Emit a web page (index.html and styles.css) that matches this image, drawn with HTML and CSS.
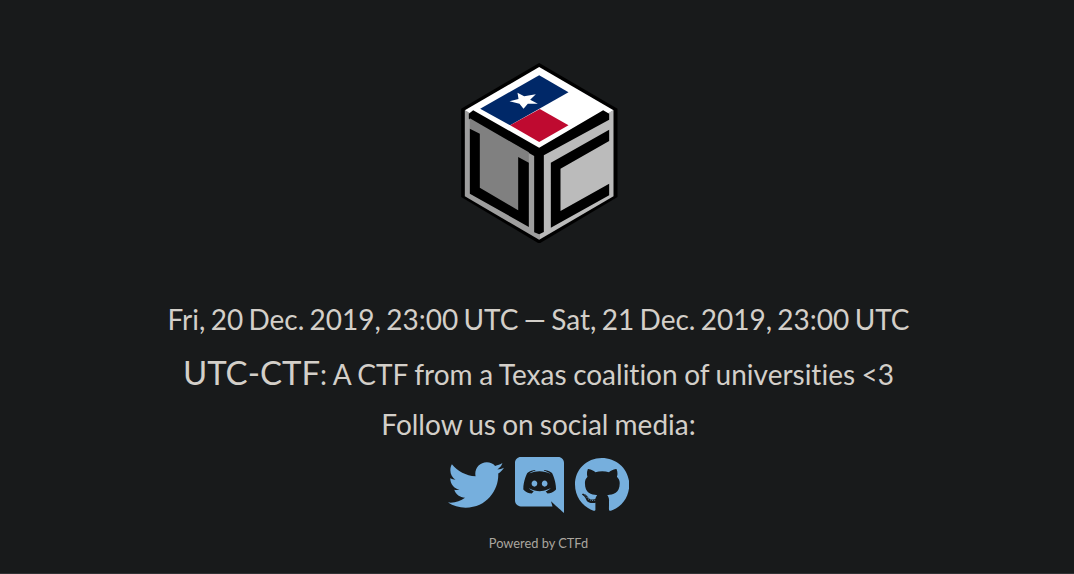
FILE: index.html
```html
<!DOCTYPE html>
<html lang="en">
<head>
    <meta charset="UTF-8">
    <meta name="viewport" content="width=device-width, initial-scale=1.0">
    <title>UTC-CTF</title>
    <link rel="stylesheet" href="styles.css">
</head>
<body>
    <main class="page">
        <!-- logo is traced in 3x coordinates -->
        <svg class="logo" viewBox="63 38 470 540" role="img" aria-label="UTC-CTF logo">
            <polygon fill="#000" points="297,38 532,175 532,440 297,580 63,440 63,175"/>
            <polygon fill="#9e9e9e" points="74,180 297,292 297,568 74,438"/>
            <polygon fill="#bbb" points="297,292 520,180 520,438 297,568"/>
            <polygon fill="#fff" points="297,50 520,180 297,308 74,180"/>
            <polygon fill="#002868" points="297,75 385,126 210,225 120,175"/>
            <polygon fill="#bf0a30" points="299,176 385,225 297,275 210,225"/>
            <polygon fill="#fff" points="232,127 252,138 287,132 270,148 293,160 263,160 250,175 238,160 208,153 235,146"/>
            <!-- Y shape between the faces -->
            <polygon fill="#000" points="86,190 99,180 297,292 489,180 507,190 507,208 311,315 311,545 297,552 282,546 282,317 86,205"/>
            <!-- U -->
            <polygon fill="#808080" points="89,204 266,306 266,337 234,480 119,418 89,235"/>
            <polygon fill="#000" points="89,235 119,250 119,412 234,480 234,320 266,337 266,530 89,430"/>
            <!-- C -->
            <polygon fill="#000" points="332,337 507,238 507,272 361,355 361,482 507,400 507,435 332,532"/>
        </svg>

        <h2 class="dates">Fri, 20 Dec. 2019, 23:00 UTC — Sat, 21 Dec. 2019, 23:00 UTC</h2>
        <p class="tagline"><span class="tagline-name">UTC-CTF</span>: A CTF from a Texas coalition of universities &lt;3</p>
        <p class="follow">Follow us on social media:</p>

        <div class="socials">
            <a href="#" class="social-link" aria-label="Twitter">
                <svg class="icon-twitter" viewBox="0 0 512 512"><path d="M459.37 151.716c.325 4.548.325 9.097.325 13.645 0 138.72-105.583 298.558-298.558 298.558-59.452 0-114.68-17.219-161.137-47.106 8.447.974 16.568 1.299 25.34 1.299 49.055 0 94.213-16.568 130.274-44.832-46.132-.975-84.792-31.188-98.112-72.772 6.498.974 12.995 1.624 19.818 1.624 9.421 0 18.843-1.3 27.614-3.573-48.081-9.747-84.143-51.98-84.143-102.985v-1.299c13.969 7.797 30.214 12.67 47.431 13.319-28.264-18.843-46.781-51.005-46.781-87.391 0-19.492 5.197-37.36 14.294-52.954 51.655 63.675 129.3 105.258 216.365 109.807-1.624-7.797-2.599-15.918-2.599-24.04 0-57.828 46.782-104.934 104.934-104.934 30.213 0 57.502 12.67 76.67 33.137 23.715-4.548 46.456-13.32 66.599-25.34-7.798 24.366-24.366 44.833-46.132 57.827 21.117-2.273 41.584-8.122 60.426-16.243-14.292 20.791-32.161 39.308-52.628 54.253z"/></svg>
            </a>
            <a href="#" class="social-link" aria-label="Discord">
                <svg class="icon-discord" viewBox="0 0 448 512"><path d="M297.216 243.2c0 15.616-11.52 28.416-26.112 28.416-14.336 0-26.112-12.8-26.112-28.416s11.52-28.416 26.112-28.416c14.592 0 26.112 12.8 26.112 28.416zm-119.552-28.416c-14.592 0-26.112 12.8-26.112 28.416s11.776 28.416 26.112 28.416c14.592 0 26.112-12.8 26.112-28.416.256-15.616-11.52-28.416-26.112-28.416zM448 52.736V512c-64.494-56.994-43.868-38.128-118.784-107.776l13.568 47.36H52.48C23.552 451.584 0 428.032 0 398.848V52.736C0 23.552 23.552 0 52.48 0h343.04C424.448 0 448 23.552 448 52.736zm-72.96 242.688c0-82.432-36.864-149.248-36.864-149.248-36.864-27.648-71.936-26.88-71.936-26.88l-3.584 4.096c43.52 13.312 63.744 32.512 63.744 32.512-60.812-33.329-132.244-33.335-191.232-7.424-9.472 4.352-15.104 7.424-15.104 7.424s21.248-20.224 67.328-33.536l-2.56-3.072s-35.072-.768-71.936 26.88c0 0-36.864 66.816-36.864 149.248 0 0 21.504 37.12 78.08 38.912 0 0 9.472-11.52 17.152-21.248-32.512-9.728-44.8-30.208-44.8-30.208 3.766 2.636 9.976 6.053 10.496 6.4 43.21 24.198 104.588 32.126 159.744 8.96 8.96-3.328 18.944-8.192 29.44-15.104 0 0-12.8 20.992-46.336 30.464 7.68 9.728 16.896 20.736 16.896 20.736 56.576-1.792 78.336-38.912 78.336-38.656z"/></svg>
            </a>
            <a href="#" class="social-link" aria-label="GitHub">
                <svg class="icon-github" viewBox="0 0 496 512"><path d="M165.9 397.4c0 2-2.3 3.6-5.2 3.6-3.3 0-5.6-1.6-5.6-3.6 0-2 2.3-3.6 5.2-3.6 3-.3 5.6 1.3 5.6 3.6zm-31.1-4.5c-.7 2 1.3 4.3 4.3 4.9 2.6 1 5.6 0 6.2-2s-1.3-4.3-4.3-5.2c-2.6-.7-5.5.3-6.2 2.3zm44.2-1.7c-2.9.7-4.9 2.6-4.6 4.9.3 2 2.9 3.3 5.9 2.6 2.9-.7 4.9-2.6 4.6-4.6-.3-1.9-3-3.2-5.9-2.9zM244.8 8C106.1 8 0 113.3 0 252c0 110.9 69.8 205.8 169.5 239.2 12.8 2.3 17.3-5.6 17.3-12.1 0-6.2-.3-40.4-.3-61.4 0 0-70 15-84.7-29.8 0 0-11.4-29.1-27.8-36.6 0 0-22.9-15.7 1.6-15.4 0 0 24.9 2 38.6 25.8 21.9 38.6 58.6 27.5 72.9 20.9 2.3-16 8.8-27.1 16-33.7-55.9-6.2-112.3-14.3-112.3-110.5 0-27.5 7.6-41.3 23.6-58.9-2.6-6.5-11.1-33.3 2.6-67.9 20.9-6.5 69 27 69 27 20-5.6 41.5-8.5 62.8-8.5s42.8 2.9 62.8 8.5c0 0 48.1-33.6 69-27 13.7 34.7 5.2 61.4 2.6 67.9 16 17.7 25.8 31.5 25.8 58.9 0 96.5-58.9 104.2-114.8 110.5 9.2 7.9 17 22.9 17 46.4 0 33.7-.3 75.4-.3 83.6 0 6.5 4.6 14.4 17.3 12.1C428.2 457.8 496 362.9 496 252 496 113.3 383.5 8 244.8 8zM97.2 352.9c-1.3 1-1 3.3.7 5.2 1.6 1.6 3.9 2.3 5.2 1 1.3-1 1-3.3-.7-5.2-1.6-1.6-3.9-2.3-5.2-1zm-10.8-8.1c-.7 1.3.3 2.9 2.3 3.9 1.6 1 3.6.7 4.3-.7.7-1.3-.3-2.9-2.3-3.9-2-.6-3.6-.3-4.3.7zm32.4 35.6c-1.6 1.3-1 4.3 1.3 6.2 2.3 2.3 5.2 2.6 6.5 1 1.3-1.3.7-4.3-1.3-6.2-2.2-2.3-5.2-2.6-6.5-1zm-11.4-14.7c-1.6 1-1.6 3.6 0 5.9 1.6 2.3 4.3 3.3 5.6 2.3 1.6-1.3 1.6-3.9 0-6.2-1.4-2.3-4-3.3-5.6-2z"/></svg>
            </a>
        </div>

        <footer class="footer">Powered by CTFd</footer>
    </main>
</body>
</html>
```

FILE: styles.css
```css
html, body {
    margin: 0;
    height: 100%;
    overflow: hidden;
}

body {
    box-sizing: border-box;
    background-color: #181a1b;
    border-bottom: 1px solid #303234;
    color: #d3cfc9;
    font-family: Lato, sans-serif;
    font-variant-ligatures: none;
}

.page {
    display: flex;
    flex-direction: column;
    align-items: center;
    padding: 63px 0 0 3px;
}

.logo {
    display: block;
    width: 157px;
    height: 180px;
    margin-left: 2px;
}

.dates {
    margin: 58px 0 0;
    font-size: 28px;
    font-weight: 400;
    line-height: 36px;
    word-spacing: -1.85px;
}

.tagline {
    margin: 14px 0 0;
    font-size: 28px;
    line-height: 42px;
    word-spacing: -0.6px;
}

.tagline-name {
    font-size: 33px;
}

.follow {
    margin: 9px 0 0;
    font-size: 28px;
    line-height: 40px;
    word-spacing: -1px;
}

.socials {
    display: flex;
    gap: 11px;
    margin-top: 13px;
}

.social-link {
    display: block;
    height: 56px;
    color: #76afdd;
}

.social-link svg {
    display: block;
    height: 56px;
    fill: currentColor;
}

.icon-twitter { width: 56px; }
.icon-discord { width: 49px; }
.icon-github { width: 54.25px; }

.footer {
    margin-top: 20px;
    font-size: 12.8px;
    line-height: 20px;
    color: #aaa69f;
}
```
